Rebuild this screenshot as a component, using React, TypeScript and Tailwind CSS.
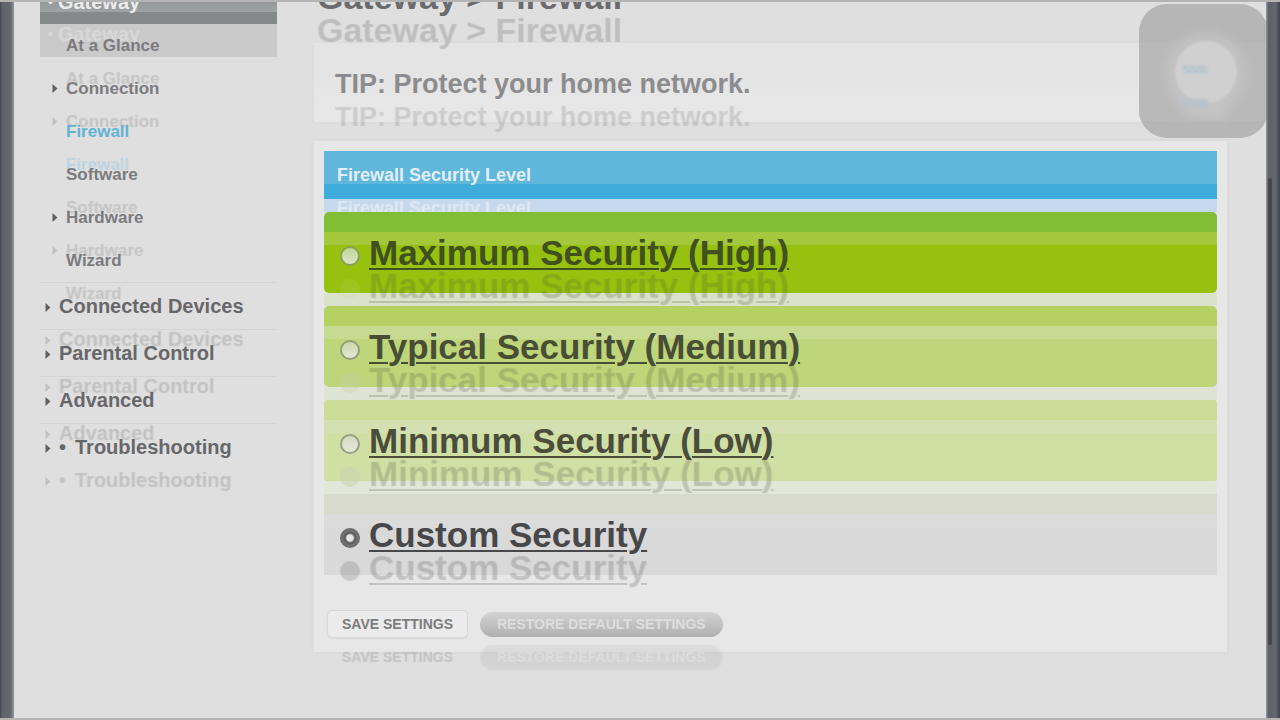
import React from "react";

type NavEntry = { label: string; arrow?: boolean; active?: boolean; bullet?: boolean };

const subItems: NavEntry[] = [
  { label: "At a Glance" },
  { label: "Connection", arrow: true },
  { label: "Firewall", active: true },
  { label: "Software" },
  { label: "Hardware", arrow: true },
  { label: "Wizard" },
];

const sections: NavEntry[] = [
  { label: "Connected Devices" },
  { label: "Parental Control" },
  { label: "Advanced" },
  { label: "Troubleshooting", bullet: true },
];

const levels = [
  {
    id: "high",
    label: "Maximum Security (High)",
    row: "rounded-[5px] bg-[linear-gradient(#82bd36_20px,#a3c83c_20px,#a3c83c_33px,#96c10e_33px)]",
    gap: "bg-[#dae2cb]",
    text: "text-[#40501f] [text-shadow:0_33px_1px_rgba(80,105,50,0.26)]",
    radio: "border-[#86a355] bg-[linear-gradient(#bdd596,#dbe6c8)] shadow-[0_33px_0_rgba(200,220,150,0.15)]",
  },
  {
    id: "medium",
    label: "Typical Security (Medium)",
    row: "rounded-[5px] bg-[linear-gradient(#b4d162_20px,#c7da91_20px,#c7da91_33px,#bed579_33px)]",
    gap: "bg-[#dee4d4]",
    text: "text-[#474e35] [text-shadow:0_33px_1px_rgba(80,90,60,0.24)]",
    radio: "border-[#939f78] bg-[linear-gradient(#c9d7aa,#e2e8d4)] shadow-[0_33px_0_rgba(200,210,170,0.35)]",
  },
  {
    id: "low",
    label: "Minimum Security (Low)",
    row: "rounded-[3px] bg-[linear-gradient(#ccdc96_20px,#d5e0b2_20px,#d5e0b2_33px,#d0dfa3_33px)]",
    gap: "bg-[#e3e7da]",
    text: "text-[#4a4d3b] [text-shadow:0_33px_1px_rgba(80,85,65,0.24)]",
    radio: "border-[#979f86] bg-[linear-gradient(#d3dcbf,#e5e8dc)] shadow-[0_33px_0_rgba(200,208,178,0.5)]",
  },
  {
    id: "custom",
    label: "Custom Security",
    row: "bg-[linear-gradient(#d8dace_20px,#dbdbdb_20px,#dbdbdc_33px,#d9d9da_33px)]",
    gap: "bg-transparent",
    text: "text-[#48484a] [text-shadow:0_33px_1px_rgba(70,70,70,0.22)]",
    radio: "border-[#6c6c6e] bg-[radial-gradient(circle,#e6e6e6_3px,#58585a_5px,#858587_9px)] shadow-[0_33px_1px_rgba(110,110,110,0.25)]",
  },
];

function Arrow({ className }: { className: string }) {
  return (
    <svg viewBox="0 0 6 42" aria-hidden="true" className={className}>
      <path d="M0.500 0 L5.500 4.500 L0.500 9 Z" fill="#606062" />
      <path d="M0.500 33 L5.500 37.500 L0.500 42 Z" fill="#c2c2c4" />
    </svg>
  );
}

function Sidebar() {
  return (
    <nav aria-label="Gateway navigation" className="w-[237px] shrink-0">
      <div className="h-[57px] bg-[linear-gradient(#929696_0px,#a0a3a3_12px,#858989_12px,#858989_24px,#cacacb_24px)]">
        <a
          href="#gateway"
          className="flex h-0 items-center gap-[5px] pl-[8px] pt-[2px] text-[20px] leading-[24px] font-bold text-[#ececec] [text-shadow:0_32px_1px_rgba(240,240,240,0.4)]"
        >
          <span className="text-[14px]">•</span>
          <span>Gateway</span>
        </a>
      </div>
      <ul className="-mt-[33px]">
        {subItems.map((item) => (
          <li key={item.label} className="flex h-[43px] items-center pl-[12px]">
            <span className="flex h-[9px] w-[14px] items-start">
              {item.arrow && <Arrow className="h-[42px] w-[6px] shrink-0" />}
            </span>
            <a
              href={"#" + item.label}
              className={
                item.active
                  ? "text-[17px] leading-[24px] font-bold text-[#63b3d5] [text-shadow:0_33px_1px_rgba(120,190,225,0.35)]"
                  : "text-[17px] leading-[24px] font-bold text-[#7b7b7e] [text-shadow:0_33px_1px_rgba(90,90,90,0.2)]"
              }
            >
              {item.label}
            </a>
          </li>
        ))}
      </ul>
      <ul>
        {sections.map((item) => (
          <li key={item.label} className="flex h-[47px] items-center border-t border-[#d4d4d4] pl-[5px]">
            <span className="flex h-[7px] w-[14px] items-start">
              <Arrow className="h-[42px] w-[6px] shrink-0" />
            </span>
            <a
              href={"#" + item.label}
              className="flex text-[20px] leading-[24px] font-bold text-[#67676a] [text-shadow:0_33px_1px_rgba(90,90,90,0.22)]"
            >
              {item.bullet && <span className="w-[16px]">•</span>}
              {item.label}
            </a>
          </li>
        ))}
      </ul>
    </nav>
  );
}

function AssistiveButton() {
  return (
    <button
      type="button"
      aria-label="Assistive menu"
      className="absolute top-[4px] right-[-2px] h-[134px] w-[129px] overflow-hidden rounded-[28px] bg-[#b6b6b6]"
    >
      <svg viewBox="0 0 129 134" className="h-full w-full" aria-hidden="true">
        <defs>
          <filter id="soft" x="-30%" y="-30%" width="160%" height="160%">
            <feGaussianBlur stdDeviation="4" />
          </filter>
          <filter id="faint" x="-30%" y="-30%" width="160%" height="160%">
            <feGaussianBlur stdDeviation="1.200" />
          </filter>
        </defs>
        <rect x="0" y="39" width="129" height="78" fill="#b9b9b9" />
        <circle cx="67" cy="69" r="41" fill="#c1c1c1" filter="url(#soft)" />
        <path d="M36 82 L88 82 L88 116 L46 112 Z" fill="#c3c3c3" filter="url(#soft)" />
        <circle cx="67" cy="68" r="31" fill="#d0d0d0" filter="url(#faint)" />
        <g filter="url(#faint)">
          <rect x="43" y="61" width="26" height="9" fill="#c2ccd1" />
          <path d="M44 63 H66 M47 67 H69" stroke="#afbfc9" strokeWidth="2" strokeDasharray="5 2" />
          <rect x="42" y="95" width="27" height="8" fill="#bac2cb" />
        </g>
      </svg>
    </button>
  );
}

export default function App() {
  return (
    <div className="flex min-h-screen overflow-hidden border-t-2 border-b-2 border-[#b4b4b4] bg-[#dfdfdf] font-['Liberation_Sans',Arial,sans-serif]">
      <div className="-my-[2px] w-[14px] shrink-0 bg-[linear-gradient(90deg,#4a4e55_1px,#5d6269_2px,#656a70_11px,#8b9098_13px)]" />
      <div className="relative -mt-[2px] flex min-w-0 flex-1 overflow-hidden pr-[39px] pl-[26px]">
        <Sidebar />
        <main className="ml-[37px] min-w-0 flex-1">
          <h1 className="-mt-[23px] mb-[26px] pl-[3px] text-[34px] leading-[40px] font-bold text-[#6b6b6d] [text-shadow:0_33px_1px_rgba(80,80,80,0.23)]">
            Gateway &gt; Firewall
          </h1>
          <section className="bg-[linear-gradient(#e4e4e4_33px,#e7e7e7_60px)] px-[21px] pt-[23px] pb-[20px] shadow-[0_0_4px_#dadada]">
            <p className="text-[27px] leading-[36px] font-bold text-[#8c8c8e] [text-shadow:0_33px_1px_rgba(100,100,100,0.2)]">
              TIP: Protect your home network.
            </p>
          </section>
          <form
            onSubmit={(e) => e.preventDefault()}
            className="mt-[19px] bg-[#e7e7e7] px-[10px] pt-[10px] pb-[14px] shadow-[0_0_5px_#d6d6d6]"
          >
            <div className="h-[61px] overflow-hidden bg-[linear-gradient(#5fb7dc_33px,#3eaddd_33px,#3eaddd_48px,#c6d9ec_48px)] px-[13px] pt-[12px]">
              <h2 className="text-[18px] leading-[24px] font-bold text-[#e3eff4] [text-shadow:0_33px_1px_rgba(240,245,250,0.6)]">
                Firewall Security Level
              </h2>
            </div>
            {levels.map((level) => (
              <div key={level.id}>
                <div className={"flex h-[81px] items-center gap-[9px] pl-[16px] " + level.row}>
                  <input
                    type="radio"
                    name="level"
                    id={level.id}
                    defaultChecked={level.id === "custom"}
                    className={"mt-[7px] h-[20px] w-[20px] shrink-0 appearance-none rounded-full border-2 " + level.radio}
                  />
                  <label
                    htmlFor={level.id}
                    className={"text-[35px] leading-[40px] font-bold underline decoration-2 underline-offset-3 " + level.text}
                  >
                    {level.label}
                  </label>
                </div>
                <div className={"h-[13px] " + level.gap} />
              </div>
            ))}
            <div className="mt-[22px] flex items-center gap-[12px] pl-[3px]">
              <button
                type="submit"
                className="h-[28px] rounded-[5px] border border-[#d8d8d8] bg-[#ebebeb] px-[14px] text-[14px] font-bold text-[#7c7c7e] shadow-[0_1px_2px_#dadada] [text-shadow:0_33px_1px_rgba(90,90,90,0.22)]"
              >
                SAVE SETTINGS
              </button>
              <button
                type="button"
                className="h-[25px] rounded-full bg-[linear-gradient(#d3d3d3,#afafaf)] px-[17px] text-[14px] font-bold text-[#dedede] shadow-[0_33px_2px_rgba(0,0,0,0.05)] [text-shadow:0_33px_1px_rgba(228,228,228,0.6)]"
              >
                RESTORE DEFAULT SETTINGS
              </button>
            </div>
          </form>
        </main>
        <AssistiveButton />
      </div>
      <div className="-my-[2px] w-[14px] shrink-0 bg-[linear-gradient(90deg,#8b9098_1px,#5d6269_2px,#62676f_10px,#43484f_13px)] pt-[178px]">
        <div className="ml-[2px] h-[467px] w-[4px] rounded-full bg-[#43474d]" />
      </div>
    </div>
  );
}
